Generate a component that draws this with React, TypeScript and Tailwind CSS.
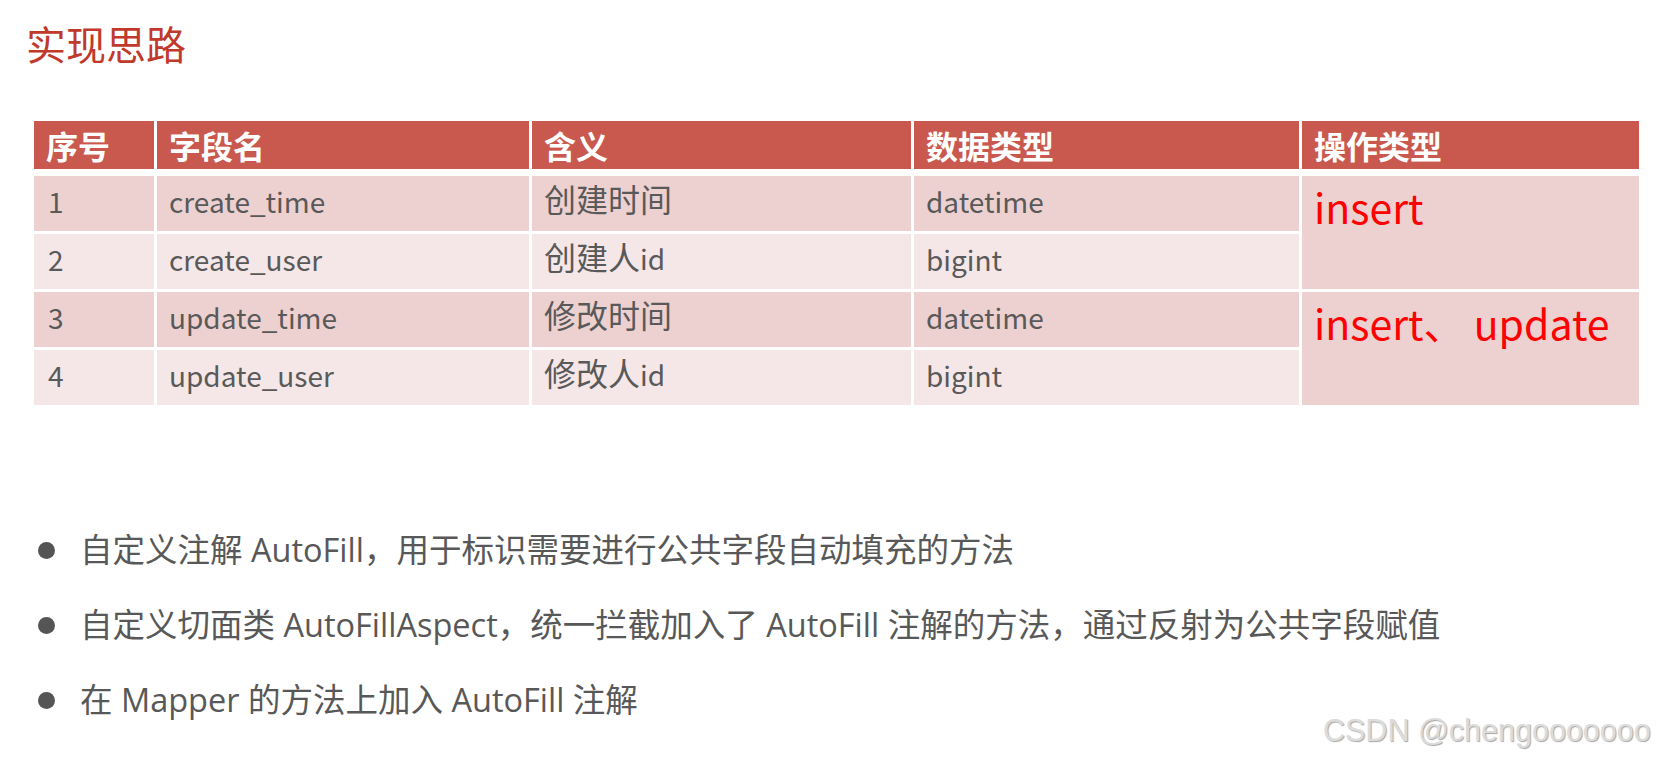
import React from "react";

const rows = [
  { no: "1", field: "create_time", meaning: "创建时间", type: "datetime", bg: "bg-[#edd1d1]" },
  { no: "2", field: "create_user", meaning: "创建人id", type: "bigint", bg: "bg-[#f5e7e8]" },
  { no: "3", field: "update_time", meaning: "修改时间", type: "datetime", bg: "bg-[#edd1d1]" },
  { no: "4", field: "update_user", meaning: "修改人id", type: "bigint", bg: "bg-[#f5e7e8]" },
];

const headers = ["序号", "字段名", "含义", "数据类型", "操作类型"];

const bullets = [
  "自定义注解 AutoFill，用于标识需要进行公共字段自动填充的方法",
  "自定义切面类 AutoFillAspect，统一拦截加入了 AutoFill 注解的方法，通过反射为公共字段赋值",
  "在 Mapper 的方法上加入 AutoFill 注解",
];

function Mixed({ text }: { text: string }) {
  const parts = text.match(/[\u3000-\u9fff\uff00-\uffef]+|[^\u3000-\u9fff\uff00-\uffef]+/g) || [];
  return (
    <>
      {parts.map((p, i) =>
        /[\u3000-\u9fff\uff00-\uffef]/.test(p) ? (
          <span key={i} className="text-[32px]">
            {p}
          </span>
        ) : (
          <span key={i} className="text-[28px]">
            {p}
          </span>
        )
      )}
    </>
  );
}

export default function App() {
  return (
    <div className="relative w-[1657px] h-[763px] overflow-hidden bg-white font-['Noto_Sans_CJK_SC',sans-serif]">
      <div className="pl-[26px] pt-[17px] text-[40px] leading-[52px] text-[#c0392b]">实现思路</div>

      <div className="ml-[34px] mt-[52px] w-[1605px]">
        <div className="grid grid-cols-[120px_372px_379px_385px_337px] gap-x-[3px] h-[48px] bg-white">
          {headers.map((h) => (
            <div key={h} className="flex items-center bg-[#c9584f] pl-3 text-[32px] font-bold text-white leading-none">
              {h}
            </div>
          ))}
        </div>
        <div className="mt-[7px] grid grid-cols-[120px_372px_379px_385px_337px] grid-rows-[55px_55px_55px_55px] gap-[3px]">
          {rows.map((r, i) => (
            <React.Fragment key={r.no}>
              <div className={`flex items-center pb-[6px] pl-[14px] text-[28px] leading-[40px] text-[#595959] ${r.bg}`}>{r.no}</div>
              <div className={`flex items-center pb-[6px] pl-3 text-[28px] leading-[40px] text-[#595959] ${r.bg}`}>{r.field}</div>
              <div className={`flex items-center pb-[5px] pl-3 leading-[40px] text-[#595959] ${r.bg}`}>
                <div>
                  <Mixed text={r.meaning} />
                </div>
              </div>
              <div className={`flex items-center pb-[6px] pl-3 text-[28px] leading-[40px] text-[#595959] ${r.bg}`}>{r.type}</div>
              {i % 2 === 0 && (
                <div className="row-span-2 bg-[#edd1d1] pl-3 pt-[4px] text-[41px] leading-[52px] text-[#ff0000]">
                  {i === 0 ? "insert" : "insert、 update"}
                </div>
              )}
            </React.Fragment>
          ))}
        </div>
      </div>

      <div className="mt-[108px] flex flex-col">
        {bullets.map((b) => (
          <div key={b} className="flex h-[75px] items-center">
            <div className="ml-[38px] h-[17px] w-[17px] rounded-full bg-[#555555]" />
            <div className="ml-[25px] font-['Open_Sans','Noto_Sans_CJK_SC',sans-serif] text-[32.5px] text-[#585858]">{b}</div>
          </div>
        ))}
      </div>

      <div className="absolute left-[1323px] top-[711px] font-['Liberation_Sans',sans-serif] text-[30.5px] leading-[38px] text-[#dcdcdc] [text-shadow:1px_1px_1px_rgba(0,0,0,0.35)]">
        CSDN @chengooooooo
      </div>
    </div>
  );
}
